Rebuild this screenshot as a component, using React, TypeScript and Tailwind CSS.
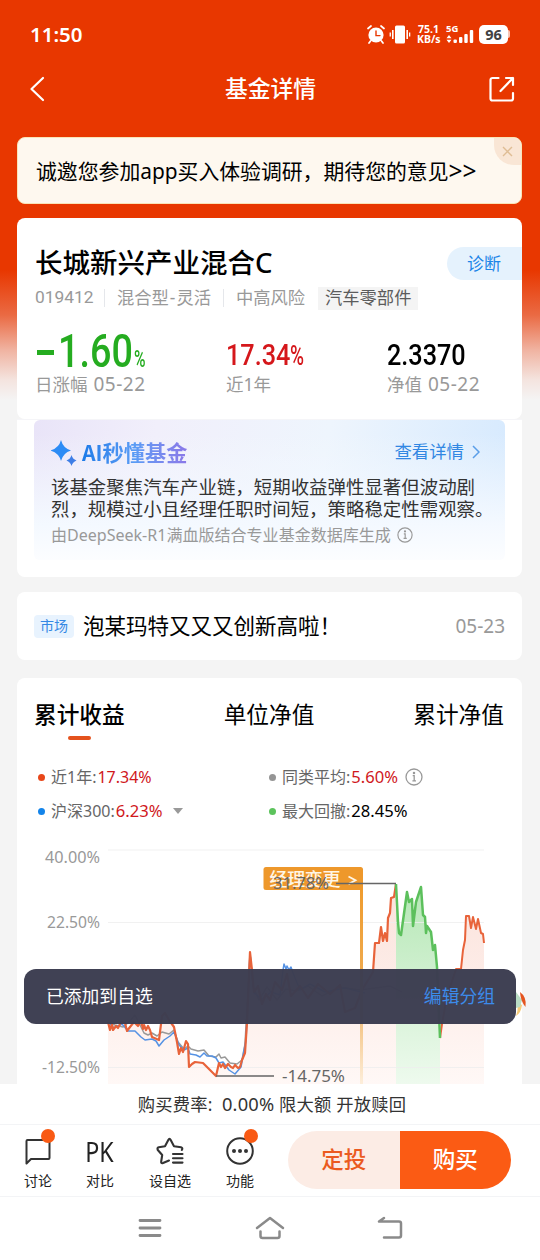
import type { ReactNode } from "react";

const metrics = [
  { label: "近1年:", value: "17.34%", dot: "bg-[#e8471a]", color: "text-[#d0181c] text-[16px]" },
  { label: "同类平均:", value: "5.60%", dot: "bg-[#959595]", color: "text-[#d0181c] text-[16.6px]", info: true },
  { label: "沪深300:", value: "6.23%", dot: "bg-[#1384ea]", color: "text-[#d0181c] text-[16.6px]", caret: true },
  { label: "最大回撤:", value: "28.45%", dot: "bg-[#5cc35c]", color: "text-black text-[16.6px]" },
];

const fundStart =
  "108,1022 110,1030 112,1024 113,1030 116,1026 118,1028 121,1022 125,1023 127,1031 130,1027 134,1022 138,1026 141,1021 143,1029 144,1025 146,1030 148,1026 150,1030 152,1037 159,1040 162,1016 165,1013 169,1020 174,1027 177,1042 179,1054 181,1048 183,1052 186,1041 188,1044 189,1067 192,1064 195,1062 203,1063 207,1067 210,1070 216,1076 219,1063 221,1067 223,1064 225,1068 228,1064 231,1067 233,1068 235,1065 238,1068 240,1067 242,1060 245,1053 247,1023 250,952 252,970 254,992 258,986 262,1004 266,994 270,1000 275,982 282,990 287,974 291,996 300,986 308,998 318,984 330,994 340,985 345,1012 355,1008 362,990 373,972 375,943 379,943 381,927 383,941 385,933 387,941 388,918 390,913 391,898 394,897 396,884";
const drawdown =
  "396,884 398,922 399,933 401,935 407,892 409,902 412,899 413,926 416,902 421,887 423,915 425,917 426,933 427,926 431,932 433,950 435,945 437,967 440,1038";
const fundEnd =
  "440,1038 442,1024 447,996 456,969 461,969 463,950 465,940 466,916 469,916 471,928 473,917 476,929 478,919 481,933 483,934 484,943";

function InfoIcon({ size }: { size: number }) {
  return (
    <svg width={size} height={size} viewBox="0 0 18 18" fill="none" stroke="#999" strokeWidth="1.3">
      <circle cx="9" cy="9" r="8" />
      <path d="M7.7 7.7h1.5v5M7.4 12.8h3.6" />
      <circle cx="9" cy="5" r="0.6" fill="#999" />
    </svg>
  );
}

function StatusBar() {
  return (
    <div className="flex h-[68px] items-center pl-[30px] pr-[30px] text-white">
      <span className="flex-1 font-['Noto_Sans'] text-[20.5px] font-semibold leading-none">11:50</span>
      <svg width="18" height="19" viewBox="0 0 18 19" fill="none" stroke="white" strokeLinecap="round">
        <circle cx="9" cy="10" r="7.6" fill="white" stroke="none" />
        <path d="M1 3.5 4 1M17 3.5 14 1M3.5 16 2 18M14.5 16 16 18" strokeWidth="1.7" />
        <path d="M9 6v4.6h4" stroke="#e83700" strokeWidth="1.4" />
      </svg>
      <svg className="ml-1" width="22" height="19" viewBox="0 0 22 19" fill="white">
        <rect x="6" y="0.5" width="10" height="18" rx="1.5" />
        <path d="M3 5h1.6v9H3zM17.4 5H19v9h-1.6zM0.6 7.5h1.3v4H0.6zM20 7.5h1.3v4H20z" />
      </svg>
      <div className="ml-[6px] w-[23px] text-center font-['Noto_Sans'] text-[10.5px] font-bold leading-[10px]">
        <div>75.1</div>
        <div>KB/s</div>
      </div>
      <svg className="ml-[6px] overflow-visible" width="28" height="20" viewBox="0 0 28 20" fill="white">
        <text x="0" y="7.5" fontFamily="Noto Sans" fontSize="9.5" fontWeight="700">5G</text>
        <path d="M3 11l2.5 3.2h-5zM3 19l2.5-3.2h-5z" />
        <rect x="7.5" y="15.5" width="3.4" height="3.5" rx="1" />
        <rect x="13" y="13" width="3.4" height="6" rx="1" />
        <rect x="18.3" y="10" width="3.4" height="9" rx="1" />
        <rect x="23.8" y="6" width="3.4" height="13" rx="1" />
      </svg>
      <div className="ml-[5px] flex h-[19px] w-[29px] items-center justify-center rounded-[5px] bg-white font-['Noto_Sans'] text-[14.5px] font-bold leading-none text-[#424242]">
        96
      </div>
      <div className="h-2 w-[2px] rounded-r bg-white/70" />
    </div>
  );
}

function NavHeader() {
  return (
    <div className="flex h-[42px] items-center justify-between pl-[29px] pr-[25px] text-white">
      <svg width="16" height="26" viewBox="0 0 16 26" fill="none" stroke="white" strokeWidth="2.2" strokeLinecap="round" strokeLinejoin="round">
        <path d="M14 2 2.5 13 14 24" />
      </svg>
      <h1 className="ml-[7px] pt-px text-[22.8px] font-medium leading-none">基金详情</h1>
      <svg width="26" height="26" viewBox="0 0 26 26" fill="none" stroke="white" strokeWidth="2.2" strokeLinecap="round" strokeLinejoin="round">
        <path d="M9.500 2H3.500a2 2 0 0 0-2 2v18.500a2 2 0 0 0 2 2H22a2 2 0 0 0 2-2V17M17 2h7v7M24 2 11.500 15" />
      </svg>
    </div>
  );
}

function Banner() {
  return (
    <div className="relative mx-[17px] mt-[27px] mr-[18px] flex h-[67px] items-center overflow-hidden rounded-lg border border-[#f9e4b8] bg-[#fef8ef] pl-[18px]">
      <span className="flex items-center whitespace-nowrap pt-px text-[20.85px] leading-none text-black">
        诚邀您参加app买入体验调研，期待您的意见<span className="text-[24.5px]">&gt;&gt;</span>
      </span>
      <div className="absolute right-0 top-0 flex h-[27px] w-[27px] items-center justify-center rounded-bl-[20px] bg-[#f9e6d5]">
        <svg width="11" height="11" viewBox="0 0 11 11" stroke="#dfbd94" strokeWidth="1.4">
          <path d="M1 1l9 9M10 1l-9 9" />
        </svg>
      </div>
    </div>
  );
}

function Figure({ label, date, children }: { label: string; date?: string; children: ReactNode }) {
  return (
    <div className="flex flex-col">
      <div className="flex h-[42px] items-end whitespace-nowrap font-[Roboto] font-medium">{children}</div>
      <div className="mt-[2px] flex items-center whitespace-nowrap text-[17.5px] leading-[26px] text-[#999]">
        {label}
        {date && <span className="ml-[6px] text-[19px] tracking-[0.5px]">{date}</span>}
      </div>
    </div>
  );
}

function FundSummary() {
  return (
    <section className="mx-[17px] mr-[18px] mt-[14px] h-[201px] rounded-lg bg-white pl-[18px]">
      <div className="flex h-[68px] items-end justify-between">
        <h2 className="whitespace-nowrap pb-[9px] text-[27.5px] font-medium leading-[28px] text-black">长城新兴产业混合C</h2>
        <span className="mb-[6px] flex h-[33px] w-[75px] items-center rounded-l-full bg-[#e5f2fd] pl-[20px] text-[17px] leading-none text-[#1c85e8]">
          诊断
        </span>
      </div>
      <div className="flex h-6 items-center whitespace-nowrap text-[17.3px] leading-none text-[#999]">
        <span className="w-[70px] border-r border-gray-200 font-[Roboto] text-[17.4px]">019412</span>
        <span className="w-[119px] border-r border-gray-200 pl-3">
          混合型<span className="mx-px">-</span>灵活
        </span>
        <span className="w-[94px] pl-3">中高风险</span>
        <span className="flex h-[23px] items-center bg-[#f4f4f4] px-[7px] text-[#5c5c5c]">汽车零部件</span>
      </div>
      <div className="mt-[17px] grid grid-cols-[191px_161px_1fr]">
        <Figure label="日涨幅" date="05-22">
          <span className="mb-[14px] mr-[4px] ml-[1.5px] h-[5px] w-[17px] bg-[#25ac20]" />
          <span className="w-[76px] origin-left scale-x-[0.83] text-[45.5px] leading-[34px] text-[#25ac20]">1.60</span>
          <span className="origin-left scale-x-[0.68] text-[23px] leading-[18px] text-[#25ac20]">%</span>
        </Figure>
        <Figure label="近1年">
          <span className="w-[64px] origin-left scale-x-[0.87] text-[29px] leading-[27px] text-[#d5171b]">17.34</span>
          <span className="origin-left scale-x-[0.68] text-[28px] leading-[27px] text-[#d5171b]">%</span>
        </Figure>
        <Figure label="净值" date="05-22">
          <span className="origin-left scale-x-[0.87] text-[29px] leading-[27px] text-black">2.3370</span>
        </Figure>
      </div>
    </section>
  );
}

function AiSummary() {
  return (
    <section className="mx-[17px] mr-[18px] h-[158px] rounded-b-lg border-t border-[#f5f5f8] bg-white px-[17px]">
      <div className="h-[140px] rounded-md bg-[linear-gradient(to_bottom,transparent_10%,#f4f9ff_75%,#fcfdff_100%),linear-gradient(100deg,#e9e4f8_0%,#f1effb_25%,#eef5fd_60%,#d5e9fe_100%)] pl-[17px] pr-[19px] pt-[16px]">
        <div className="flex h-8 items-center">
          <svg width="26" height="27" viewBox="0 0 26 27" fill="#2d8cf5">
            <path d="M10 1Q12 9 20 11.500Q12 14 10 22Q8 14-.5 11.500Q8 9 10 1Z" />
            <path d="M20.500 16Q21.500 20 25.500 21.500Q21.500 23 20.500 27Q19.500 23 15.500 21.500Q19.500 20 20.500 16Z" fill="#3e7ee6" />
          </svg>
          <span className="ml-[5px] bg-linear-to-r from-[#1b7be8] via-[#5a9cf5] to-[#8a78e8] bg-clip-text text-[21.2px] font-bold leading-[28px] text-transparent">
            <span className="font-['Noto_Sans_CJK_SC']">AI</span>秒懂基金
          </span>
          <span className="ml-auto text-[17.4px] leading-none text-[#3187e3]">查看详情</span>
          <svg className="ml-2 mr-[6px]" width="8" height="14" viewBox="0 0 8 14" fill="none" stroke="#5a9ee8" strokeWidth="1.5">
            <path d="M1 1l6 6-6 6" />
          </svg>
        </div>
        <p className="mt-[8px] whitespace-nowrap text-[18.45px] leading-[22px] text-[#333]">
          该基金聚焦汽车产业链，短期收益弹性显著但波动剧
          <br />
          烈，规模过小且经理任职时间短，策略稳定性需观察。
        </p>
        <div className="mt-[4px] flex h-[22px] items-center text-[16.050px] leading-none text-[#999]">
          <span className="mr-[6px] whitespace-nowrap">由DeepSeek-R1满血版结合专业基金数据库生成</span>
          <InfoIcon size={16} />
        </div>
      </div>
    </section>
  );
}

function MarketNews() {
  return (
    <section className="mx-[17px] mr-[18px] mt-[15px] flex h-[68px] items-center rounded-lg bg-white px-[17px]">
      <span className="flex h-[23px] w-[40px] items-center justify-center rounded-sm bg-[#e8f3fe] text-[14px] leading-none text-[#3488e4]">市场</span>
      <span className="ml-[9px] text-[21.5px] leading-none text-black">泡某玛特又又又创新高啦！</span>
      <span className="ml-auto text-[19px] leading-none text-[#999]">05-23</span>
    </section>
  );
}

function ReturnChart() {
  return (
    <svg className="block overflow-visible" width="505" height="244" viewBox="17 840 505 244" fontFamily="Noto Sans, Noto Sans CJK SC, sans-serif">
      <defs>
        <linearGradient id="warm" x1="0" y1="884" x2="0" y2="1084" gradientUnits="userSpaceOnUse">
          <stop stopColor="#fbe2db" />
          <stop offset="1" stopColor="#fff8f6" />
        </linearGradient>
        <linearGradient id="green" x1="0" y1="884" x2="0" y2="1084" gradientUnits="userSpaceOnUse">
          <stop stopColor="#b5e7b5" />
          <stop offset="1" stopColor="#eefaee" />
        </linearGradient>
        <linearGradient id="pole" x1="0" y1="885" x2="0" y2="1084" gradientUnits="userSpaceOnUse">
          <stop stopColor="#ef9b2d" />
          <stop offset="0.5" stopColor="#efac52" />
          <stop offset="1" stopColor="#fdeedb" />
        </linearGradient>
      </defs>
      <polygon points={`108,1084 ${fundStart} 396,1084`} fill="url(#warm)" />
      <polygon points={`396,1084 ${drawdown} 440,1084`} fill="url(#green)" />
      <polygon points={`440,1084 ${fundEnd} 484,1084`} fill="url(#warm)" />
      <path d="M108 850H484M108 922.500H484M108 1067.500H484" stroke="#eeeeee" strokeOpacity="0.8" />
      <g fill="none" strokeLinejoin="round">
        <polyline
          stroke="#999"
          strokeWidth="1.5"
          points="108,1022 115,1025 123,1027 129,1022 135,1015 140,1025 144,1033 148,1035 152,1033 157,1036 162,1032 169,1034 174,1030 178,1042 184,1049 188,1046 191,1049 198,1051 204,1050 209,1056 216,1057 219,1054 221,1058 225,1057 230,1063 237,1064 242,1060 245,1044 250,953 253,986 259,1000 267,987 277,1000 286,989 296,991 308,986 322,996 340,987 360,990 390,986 402,992"
        />
        <polyline
          stroke="#5592e4"
          strokeWidth="1.5"
          points="108,1022 114,1028 122,1024 128,1031 135,1031 141,1037 145,1040 152,1039 156,1041 159,1046 164,1040 170,1036 174,1032 179,1045 184,1050 188,1048 190,1054 196,1055 200,1057 204,1053 207,1056 212,1056 216,1058 219,1063 223,1062 229,1070 235,1074 241,1067 246,1040 250,954 254,993 262,999 271,992 280,995 283,970 284,964 286,969 287,966 289,970 291,967 293,973 300,990 310,984 325,992 345,988 365,993"
        />
        <polyline stroke="#e8633a" strokeWidth="2.2" points={fundStart} />
        <polyline stroke="#e8633a" strokeWidth="2" points={fundEnd} />
        <polyline stroke="#5cc05c" strokeWidth="2.5" points={drawdown} />
      </g>
      <rect x="360" y="885" width="3" height="199" fill="url(#pole)" />
      <rect x="263.500" y="867" width="99.500" height="23" rx="2.500" fill="#ee982b" />
      <text x="269.500" y="885.500" fontSize="18" fontWeight="500" fill="#fff6e6" textLength="71">经理变更</text>
      <path d="M348.500 876.500l7 3.800-7 3.800" fill="none" stroke="#fff6e6" strokeWidth="1.8" />
      <path d="M336 883.500H396M216 1076H274" stroke="#666" strokeWidth="1.400" />
      <g fontSize="16" fill="#666">
        <text x="273" y="889" textLength="56" lengthAdjust="spacingAndGlyphs">31.78%</text>
        <text x="282" y="1082" textLength="63" lengthAdjust="spacingAndGlyphs">-14.75%</text>
      </g>
      <g fontSize="16" fill="#999" textAnchor="end">
        <text x="100" y="863" textLength="55" lengthAdjust="spacingAndGlyphs">40.00%</text>
        <text x="100" y="928" textLength="53" lengthAdjust="spacingAndGlyphs">22.50%</text>
        <text x="100" y="1073" textLength="58" lengthAdjust="spacingAndGlyphs">-12.50%</text>
      </g>
    </svg>
  );
}

function ChartCard() {
  return (
    <section className="mx-[17px] mr-[18px] mt-[18px] h-[406px] rounded-t-lg bg-white">
      <div className="flex h-[62px] justify-between pl-[17px] pr-[18px] pt-[22px] text-[22.7px] leading-[30px] text-black">
        <div className="flex flex-col items-center font-medium">
          累计收益
          <span className="mt-[6px] h-1 w-[23px] rounded-full bg-[#e4521d]" />
        </div>
        <div>单位净值</div>
        <div>累计净值</div>
      </div>
      <div className="grid h-[100px] grid-cols-[231px_1fr] content-start pl-[21px] pt-[20px]">
        {metrics.map((m) => (
          <div key={m.label} className="flex h-[34px] items-center whitespace-nowrap text-[16px] leading-none">
            <span className={`mr-[6px] h-[7px] w-[7px] rounded-full ${m.dot}`} />
            <span className="mr-px text-[#666]">{m.label}</span>
            <span className={m.color}>{m.value}</span>
            {m.info && (
              <span className="ml-[7px]">
                <InfoIcon size={18} />
              </span>
            )}
            {m.caret && <span className="ml-[11px] border-x-[5px] border-t-[6px] border-x-transparent border-t-[#999]" />}
          </div>
        ))}
      </div>
      <ReturnChart />
    </section>
  );
}

function Toast() {
  return (
    <div className="absolute left-6 top-[969px] flex h-[55px] w-[492px] items-center justify-between rounded-xl bg-[#3c3d51]/98 pl-[22px] pr-[21px] text-[17.8px] leading-none">
      <span className="text-white">已添加到自选</span>
      <span className="text-[#3c8bea]">编辑分组</span>
    </div>
  );
}

function ToolItem({ label, badge, children }: { label: string; badge?: string; children: ReactNode }) {
  return (
    <div className="relative flex flex-col items-center">
      <div className="flex h-[30px] items-center">{children}</div>
      <span className="mt-[6px] whitespace-nowrap text-[14px] leading-[18px] text-[#222]">{label}</span>
      {badge && <span className={`absolute -top-[7px] h-[14px] w-[14px] rounded-full bg-[#f95a14] ${badge}`} />}
    </div>
  );
}

function BottomBar() {
  return (
    <footer className="relative h-[176px] bg-white">
      <div className="flex h-[41px] items-center justify-center border-b border-gray-100 text-[17.3px] leading-none text-[#333]">
        <span className="whitespace-nowrap pl-[4px] tracking-[0.2px]">
          购买费率:&nbsp; <span className="text-[18.3px]">0.00%</span> 限大额 开放赎回
        </span>
      </div>
      <div className="flex h-[72px] border-b border-gray-100">
        <div className="grid w-[288px] grid-cols-[76px_48px_92px_48px] pt-[11px]">
          <ToolItem label="讨论" badge="left-[41px]">
            <svg width="26" height="27" viewBox="0 0 26 27" fill="none" stroke="#333" strokeWidth="2" strokeLinejoin="round">
              <path d="M1.500 3Q1.500 2 2.500 2H23.500Q24.500 2 24.500 3V20Q24.500 21 23.500 21H6L1.500 25.500Z" />
            </svg>
          </ToolItem>
          <ToolItem label="对比">
            <span className="scale-x-[0.86] whitespace-nowrap text-[27px] leading-none text-[#222]">PK</span>
          </ToolItem>
          <ToolItem label="设自选">
            <svg width="28" height="28" viewBox="0 0 28 28" fill="none" stroke="#333" strokeWidth="2.100" strokeLinejoin="round" strokeLinecap="round">
              <path d="M13 23.500 7 26Q4.800 26.800 5.200 24.500L6.200 18 1.800 13Q.8 10.800 2.800 10.300L9 9.200 12.300 3Q13.500 .8 14.700 3L18 9.200 25 10.300Q27.200 10.900 25.800 13" />
              <path d="M17 17H26.500M17 21.300H26.500M17 25.600H26.500" />
            </svg>
          </ToolItem>
          <ToolItem label="功能" badge="left-[28px]">
            <svg width="28" height="28" viewBox="0 0 28 28" fill="none" stroke="#333" strokeWidth="2">
              <circle cx="14" cy="14" r="12.800" />
              <g fill="#333" stroke="none">
                <circle cx="8" cy="14" r="2" />
                <circle cx="14" cy="14" r="2" />
                <circle cx="20" cy="14" r="2" />
              </g>
            </svg>
          </ToolItem>
        </div>
        <div className="mt-[6px] flex h-[58px] w-[223px] overflow-hidden rounded-full text-[22.500px] font-medium leading-none">
          <button className="w-1/2 bg-[#fcece5] text-[#eb5a20]">定投</button>
          <button className="w-1/2 bg-[#fb5b14] text-white">购买</button>
        </div>
      </div>
      <div className="flex h-[62px] items-center justify-between pl-[138px] pr-[137px]">
        <svg width="24" height="20" viewBox="0 0 24 20" stroke="#8a8a8a" strokeWidth="2.800" strokeLinecap="round">
          <path d="M2 2.500H22M2 10H22M2 17.500H22" />
        </svg>
        <svg width="30" height="24" viewBox="0 0 30 24" fill="none" stroke="#8a8a8a" strokeWidth="2.500" strokeLinecap="round" strokeLinejoin="round">
          <path d="M2 12 15 2 28 12M5.500 15.500V20Q5.500 22 7.500 22H22.500Q24.500 22 24.500 20V15.500" />
        </svg>
        <svg width="26" height="24" viewBox="0 0 26 24" fill="none" stroke="#8a8a8a" strokeWidth="2.500" strokeLinecap="round" strokeLinejoin="round">
          <path d="M7 2 2 5.500H22Q24 5.500 24 7.500V19.500Q24 21.500 22 21.500H7" />
        </svg>
      </div>
    </footer>
  );
}

export default function App() {
  return (
    <main className="relative h-[1260px] w-[540px] overflow-hidden bg-[#f4f4f4] bg-[linear-gradient(to_bottom,#e83700_0px,#e83700_270px,#ea6a43_315px,#f0b3a1_350px,#f4e4df_380px,#f4f4f4_400px)] font-['Noto_Sans','Noto_Sans_CJK_SC',sans-serif]">
      <StatusBar />
      <NavHeader />
      <Banner />
      <FundSummary />
      <AiSummary />
      <MarketNews />
      <ChartCard />
      {/* floating mascot, mostly hidden by the toast */}
      <svg className="absolute left-[508px] top-[980px]" width="20" height="38" viewBox="0 0 20 38">
        <path d="M7 20Q12 24 8 36Q13 33 14 25Z" fill="#f7cc79" />
        <path d="M8 12 14 20 12 27 8 28Z" fill="#b9dcc4" />
        <path d="M12 12Q19 17 17.500 27Q12.500 21 12 12Z" fill="#e4541f" />
      </svg>
      <Toast />
      <BottomBar />
    </main>
  );
}
